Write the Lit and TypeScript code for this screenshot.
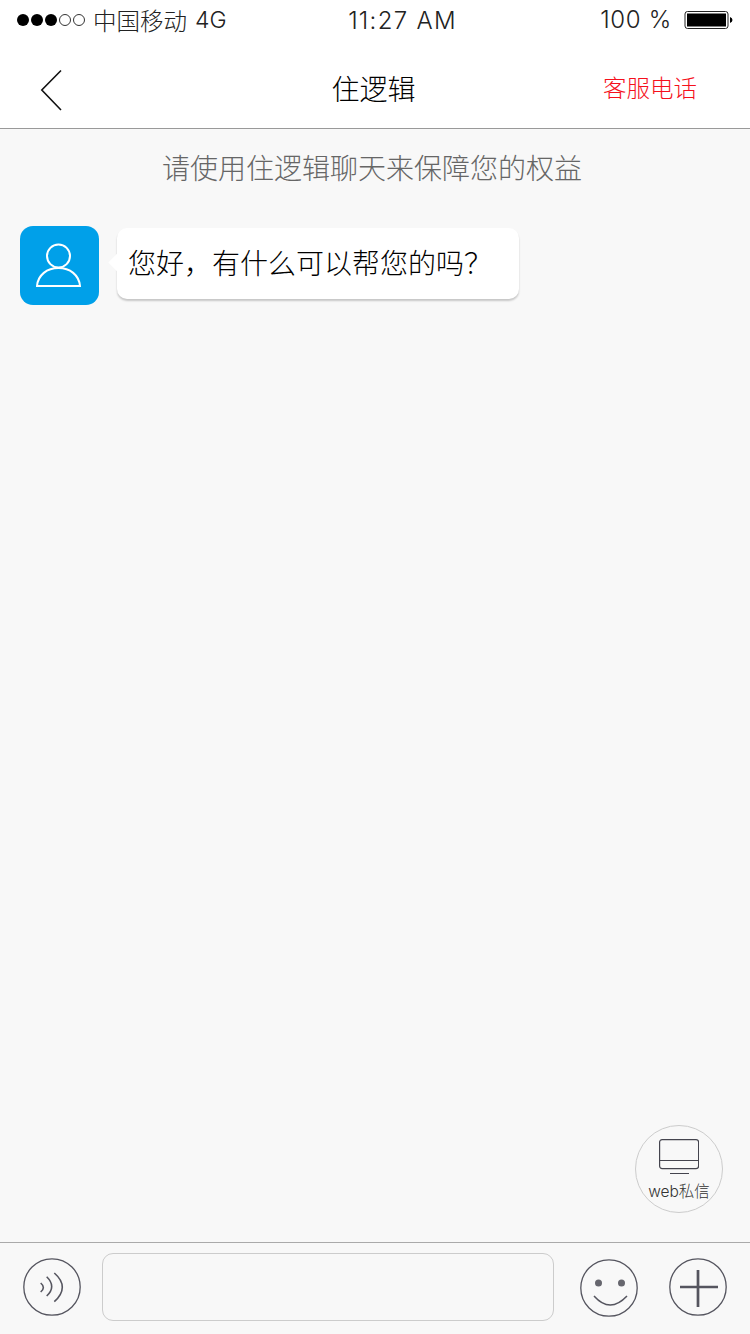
import { LitElement, html, css } from "lit";
import { customElement } from "lit/decorators.js";

@customElement("app-root")
export class AppRoot extends LitElement {
  static styles = css`
    :host { display: block; width: 750px; height: 1334px; overflow: hidden; background: #f8f8f8;
      font-family: Inter, "Noto Sans CJK SC", sans-serif; font-weight: 300; color: #222; }
    .page { display: flex; flex-direction: column; height: 1334px; }
    .status { height: 43px; flex: none; background: #fff; display: grid; grid-template-columns: 1fr auto 1fr; align-items: center;
      padding: 0 17px 3px 17px; box-sizing: border-box; font-size: 24px; line-height: 28px; color: #222; }
    .status .l, .status .r { display: flex; align-items: center; }
    .status .r { justify-content: flex-end; gap: 12px; }
    .status .r span { letter-spacing: 0.7px; }
    .time { letter-spacing: 1.3px; margin-left: 55px; margin-top: 1px; }
    .dots { display: flex; gap: 2px; margin-right: 8px; }
    .dot { width: 12px; height: 12px; border-radius: 50%; background: #000; box-sizing: border-box; }
    .dot.off { background: none; border: 1px solid #333; }
    .carrier { display: flex; gap: 8px; align-items: center; }
    .carrier b { font-weight: 300; font-size: 23.5px; line-height: 28px; font-family: "Noto Sans CJK SC", sans-serif; }
    .carrier em { font-style: normal; font-size: 23px; }
    .nav { height: 86px; flex: none; background: #fff; border-bottom: 1px solid #999; display: grid;
      grid-template-columns: 1fr auto 1fr; align-items: center; padding: 0 53px 0 40px; box-sizing: border-box; }
    .nav .title { font-size: 28px; line-height: 40px; color: #000; margin-left: 10px; margin-top: 4px; font-family: "Noto Sans CJK SC", sans-serif; }
    .nav .call { font-size: 23.5px; line-height: 34px; color: #f5101c; text-align: right; margin-top: 2px; font-family: "Noto Sans CJK SC", sans-serif; }
    .nav svg { display: block; margin-top: 8px; }
    .main { flex: 1; position: relative; }
    .notice { text-align: center; font-size: 28px; line-height: 40px; color: #666; margin-top: 18px; margin-left: -6px; font-family: "Noto Sans CJK SC", sans-serif; }
    .msg { display: flex; align-items: flex-start; padding: 39px 0 0 20px; gap: 18px; }
    .avatar { width: 79px; height: 79px; border-radius: 13px; background: #00a0e9; flex: none; display: flex; align-items: center; justify-content: center; padding-right: 1px; box-sizing: border-box; }
    .bubble { position: relative; margin-top: 2px; width: 402px; height: 71px; box-sizing: border-box; background: #fff; border-radius: 10px;
      box-shadow: 0 2px 2px rgba(0,0,0,.2); font-size: 28px; line-height: 69px; color: #000; padding-left: 11px; white-space: nowrap; font-family: "Noto Sans CJK SC", sans-serif; }
    .bubble::before { content: ""; position: absolute; left: -6px; top: 28px; width: 13px; height: 13px; background: #fff; transform: rotate(45deg); }
    .bubble span { position: relative; }
    .fab { position: absolute; left: 635px; top: 996px; width: 88px; height: 88px; box-sizing: border-box; border: 1.500px solid #ccc; border-radius: 50%;
      display: flex; flex-direction: column; align-items: center; padding-top: 13px; }
    .fab span { font-size: 15.500px; line-height: 18px; color: #333; margin-top: 8px; white-space: nowrap; }
    .bar { height: 92px; flex: none; border-top: 1px solid #aaa; box-sizing: border-box; display: flex; align-items: flex-start; padding: 15px 0 0 23px; background: #f8f8f8; }
    .bar svg { display: block; flex: none; }
    .input { width: 452px; height: 68px; box-sizing: border-box; border: 1.500px solid #ccc; border-radius: 11px; margin: -5px 26px 0 21px; flex: none; }
    .smile { margin: 1px 31px 0 0; }
  `;

  render() {
    return html`<div class="page">
      <div class="status">
        <div class="l"><div class="dots"><i class="dot"></i><i class="dot"></i><i class="dot"></i><i class="dot off"></i><i class="dot off"></i></div><span class="carrier"><b>中国移动</b><em>4G</em></span></div>
        <div class="time">11:27 AM</div>
        <div class="r"><span>100 %</span>
          <svg width="49" height="20" viewBox="0 0 49 20">
            <rect x="1" y="1.500" width="43" height="17" rx="2.500" fill="#fff" stroke="#222" stroke-width="1"/>
            <rect x="3" y="3.500" width="39" height="13" fill="#000"/>
            <path d="M46 7 Q48.500 8 48.500 10 Q48.500 12 46 13 Z" fill="#000"/>
          </svg>
        </div>
      </div>
      <div class="nav">
        <svg width="24" height="42" viewBox="0 0 24 42"><path d="M21 1.500 L1.800 21 L21 41" fill="none" stroke="#111" stroke-width="1.600"/></svg>
        <div class="title">住逻辑</div>
        <div class="call">客服电话</div>
      </div>
      <div class="main">
        <div class="notice">请使用住逻辑聊天来保障您的权益</div>
        <div class="msg">
          <div class="avatar">
            <svg width="46" height="46" viewBox="0 0 46 46" fill="none" stroke="#fff" stroke-width="2">
              <circle cx="22.500" cy="13" r="11.500"/>
              <path d="M1 43 C2 32 11 25 22.500 25 C34 25 43 32 44 43 Z"/>
            </svg>
          </div>
          <div class="bubble"><span>您好，有什么可以帮您的吗？</span></div>
        </div>
        <div class="fab">
          <svg width="40" height="36" viewBox="0 0 40 36" fill="none" stroke="#44444e" stroke-width="1.200">
            <rect x="0.600" y="0.600" width="39" height="29" rx="2.500"/>
            <path d="M0.600 21.500 H39.600 M11 34.500 H30"/>
          </svg>
          <span>web私信</span>
        </div>
      </div>
      <div class="bar">
        <svg width="58" height="58" viewBox="0 0 58 58" fill="none" stroke="#55555f" stroke-width="1.300">
          <circle cx="29" cy="29" r="28.200"/>
          <path d="M17.700 25 Q23 29.500 17.700 34" stroke-width="1.600"/>
          <path d="M23.700 18.700 Q33.700 28.500 23.700 38" stroke-width="1.600"/>
          <path d="M31.300 15 Q47.300 29 31.300 43.700" stroke-width="1.600"/>
        </svg>
        <div class="input"></div>
        <svg class="smile" width="58" height="58" viewBox="0 0 58 58" fill="none" stroke="#55555f" stroke-width="1.300">
          <circle cx="29" cy="29" r="28.200"/>
          <circle cx="18.500" cy="24" r="3.500" fill="#66666e" stroke="none"/>
          <circle cx="41.500" cy="24" r="3.500" fill="#66666e" stroke="none"/>
          <path d="M14 37 Q30 55 47 37" stroke-width="1.500"/>
        </svg>
        <svg width="58" height="58" viewBox="0 0 58 58" fill="none" stroke="#55555f" stroke-width="1.300">
          <circle cx="29" cy="29" r="28.200"/>
          <path d="M11 29 H49 M29 12 V49" stroke-width="2.700"/>
        </svg>
      </div>
    </div>`;
  }
}
